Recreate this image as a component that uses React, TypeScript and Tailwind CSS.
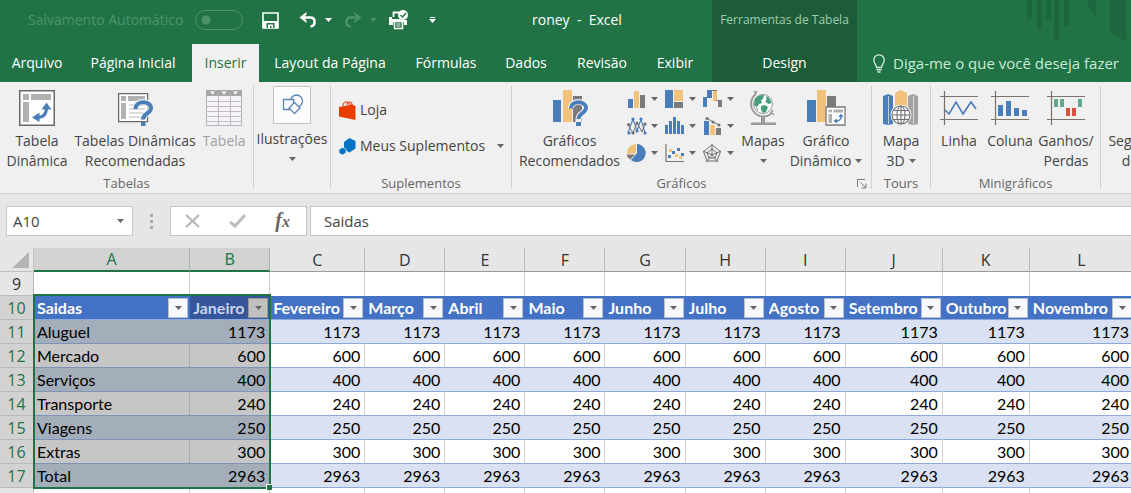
import React, { useState } from 'react'
import clsx from 'clsx'

const tabs = [
  { name: 'Arquivo', width: 'w-[74px]' },
  { name: 'Página Inicial', width: 'w-[118px]' },
  { name: 'Inserir', width: 'w-[67px]' },
  { name: 'Layout da Página', width: 'w-[142px]' },
  { name: 'Fórmulas', width: 'w-[90px]' },
  { name: 'Dados', width: 'w-[70px]' },
  { name: 'Revisão', width: 'w-[82px]' },
  { name: 'Exibir', width: 'w-16' },
]

const columns = [
  { letter: 'A', title: 'Saidas', width: 'w-[156px]' },
  { letter: 'B', title: 'Janeiro', width: 'w-20' },
  { letter: 'C', title: 'Fevereiro', width: 'w-[95px]' },
  { letter: 'D', title: 'Março', width: 'w-20' },
  { letter: 'E', title: 'Abril', width: 'w-20' },
  { letter: 'F', title: 'Maio', width: 'w-20' },
  { letter: 'G', title: 'Junho', width: 'w-20' },
  { letter: 'H', title: 'Julho', width: 'w-20' },
  { letter: 'I', title: 'Agosto', width: 'w-20' },
  { letter: 'J', title: 'Setembro', width: 'w-[97px]' },
  { letter: 'K', title: 'Outubro', width: 'w-[87px]' },
  { letter: 'L', title: 'Novembro', width: 'w-[104px]' },
]

const rows = [
  { n: 11, label: 'Aluguel', value: 1173 },
  { n: 12, label: 'Mercado', value: 600 },
  { n: 13, label: 'Serviços', value: 400 },
  { n: 14, label: 'Transporte', value: 240 },
  { n: 15, label: 'Viagens', value: 250 },
  { n: 16, label: 'Extras', value: 300 },
  { n: 17, label: 'Total', value: 2963 },
]

function Caret({ className }: { className?: string }) {
  return (
    <svg width="7" height="4" viewBox="0 0 7 4" className={clsx('shrink-0', className)} aria-hidden="true">
      <path d="M0 0h7L3.5 4z" fill="currentColor" />
    </svg>
  )
}

/* ---------- quick access icons ---------- */

function SaveIcon() {
  return (
    <svg width="17" height="17" viewBox="0 0 17 17" aria-hidden="true">
      <path d="M1 1h15v15H1z" fill="none" stroke="#fff" strokeWidth="1.6" />
      <path d="M1 9h15v7H1z" fill="#fff" />
      <path d="M4.5 11h8v5h-8z" fill="#217346" />
      <path d="M6 12.500h5V16H9.500v-2H8v2H6z" fill="#fff" />
    </svg>
  )
}

function UndoIcon({ flip }: { flip?: boolean }) {
  return (
    <svg width="18" height="16" viewBox="0 0 18 16" className={flip ? '-scale-x-100' : ''} aria-hidden="true">
      <path d="M3 5.500h8c6 0 6 8 .5 9" fill="none" stroke="currentColor" strokeWidth="2.600" />
      <path d="M7.500 0v2.500L4.500 5.500l3 3V11L0.500 5.500z" fill="currentColor" />
    </svg>
  )
}

function PrintPreviewIcon() {
  return (
    <svg width="20" height="20" viewBox="0 0 20 20" aria-hidden="true">
      <path d="M4.500 7V2.500h6" fill="none" stroke="#fff" strokeWidth="1.800" />
      <path d="M0 7h3v2h8l2 1h5v5h-3v-3H4v3H0z" fill="#fff" />
      <path d="M5.500 11.500h8v7h-8z" fill="#217346" stroke="#fff" strokeWidth="1.500" />
      <path d="M7.500 14h4M7.500 16h4" stroke="#fff" />
      <circle cx="14" cy="5" r="5" fill="#fff" />
      <path d="M11.500 5l2 2 3.500-4" fill="none" stroke="#217346" strokeWidth="1.400" />
    </svg>
  )
}

function BulbIcon() {
  return (
    <svg width="12" height="19" viewBox="0 0 12 19" fill="none" stroke="#d5f0df" strokeWidth="1.300" aria-hidden="true">
      <path d="M3.500 13.500c0-3-2.700-4-2.700-7.500a5.200 5.200 0 0 1 10.400 0c0 3.500-2.700 4.500-2.700 7.500z" />
      <path d="M3.500 15.800h5M4.500 18h3" strokeWidth="1.600" />
    </svg>
  )
}

/* ---------- ribbon icons ---------- */

function PivotIcon() {
  return (
    <svg width="36" height="36" viewBox="0 0 36 36" aria-hidden="true">
      <path d="M.75.75h34.500v34.500H.75z" fill="#fff" stroke="#6a6a6a" strokeWidth="1.500" />
      <path d="M4 4h6v6H4zM12 4h20v6H12zM4 12h6v20H4z" fill="#b1b1b1" />
      <path d="M18 27.500c6.500 0 9.500-3 9.500-10" fill="none" stroke="#4a7ebb" strokeWidth="3" />
      <path d="M27.500 12.500l5 7h-10zM13 27.500l7.500-5v9.500z" fill="#4a7ebb" />
    </svg>
  )
}

function PivotHelpIcon() {
  return (
    <svg width="36" height="36" viewBox="0 0 36 36" aria-hidden="true">
      <path d="M1.600 3.600h29v28h-29z" fill="#fff" stroke="#6a6a6a" strokeWidth="1.300" />
      <path d="M4 6h5v5H4zM11 6h17v5H11zM4 13h5v16H4z" fill="#b1b1b1" />
      <path d="M12 15h16M12 19h16M12 23h16M12 27h16" stroke="#b9b9b9" />
      <path d="M18.500 18.500c0-9 15-8.500 15-.5 0 5.500-7.500 5.500-7.500 12" fill="none" stroke="#f0f0f0" strokeWidth="6" />
      <path d="M18.500 19c0-9 15.500-8.500 15.500-1 0 5.500-8 5.500-8 11.500" fill="none" stroke="#4a7ebb" strokeWidth="4" />
      <path d="M24 32h4.500v4H24z" fill="#4a7ebb" />
    </svg>
  )
}

function TableIcon() {
  return (
    <svg width="36" height="36" viewBox="0 0 36 36" aria-hidden="true">
      <path d="M.5.500h35v35H.5z" fill="#f6f3f8" stroke="#b5b1b8" />
      <path d="M0 0h36v6H0z" fill="#a8a8a8" />
      <path d="M4 1.500h5L6.500 4.500zM15.500 1.500h5L18 4.500zM27 1.500h5L29.500 4.500z" fill="#fff" />
      <path d="M12.500 6v30M24.500 6v30M0 11.500h36M0 16.500h36M0 21.500h36M0 26.500h36M0 31.500h36" stroke="#c1bcc4" />
    </svg>
  )
}

function ShapesIcon() {
  return (
    <svg width="38" height="38" viewBox="0 0 38 38" aria-hidden="true">
      <path d="M.5.500h37v37H.5z" fill="#fafcfe" stroke="#c3c3c3" />
      <g fill="#fafcfe" stroke="#5f86b3" strokeWidth="1.300">
        <circle cx="23.500" cy="15" r="6" />
        <path d="M10.500 13.500h10v10h-10z" />
        <path d="M21.500 16.500l5.500 5.500-5.500 5.500-5.500-5.500z" />
      </g>
    </svg>
  )
}

function StoreIcon() {
  return (
    <svg width="17" height="20" viewBox="0 0 17 20" aria-hidden="true">
      <path d="M4 6c0-5 6-5.500 7-1M8 5c.5-4 5-4 5 0" fill="none" stroke="#e8532b" strokeWidth="1.200" />
      <path d="M0 7l13-2.500 3.500 1.500v14L0 16.500z" fill="#eb3c00" />
    </svg>
  )
}

function AddinsIcon() {
  return (
    <svg width="17" height="17" viewBox="0 0 17 17" aria-hidden="true">
      <path d="M10.500 0l6 3v7.500l-6 4-5.500-3V4z" fill="#0072c6" />
      <path d="M3.500 9.500L7 11v4l-3.500 2L0 15v-3.500z" fill="#0072c6" stroke="#f0f0f0" strokeWidth=".7" />
    </svg>
  )
}

function ChartHelpIcon() {
  return (
    <svg width="36" height="36" viewBox="0 0 36 36" aria-hidden="true">
      <path d="M1 10h8v22H1z" fill="#4a7ebb" />
      <path d="M11 0h9v32h-9z" fill="#f0c27b" />
      <path d="M21 6h9v26h-9z" fill="#7a7a7a" />
      <path d="M19 18c0-8 15-8 15 0 0 5-7.500 5-7.500 11.500v6" fill="none" stroke="#f0f0f0" strokeWidth="6" />
      <path d="M19 18.500c0-8.500 15-8 15-.5 0 5-7.500 5-7.500 11" fill="none" stroke="#4a7ebb" strokeWidth="3.800" />
      <path d="M24 32h5v4h-5z" fill="#4a7ebb" />
    </svg>
  )
}

function GlobeIcon() {
  return (
    <svg width="28" height="36" viewBox="0 0 28 36" aria-hidden="true">
      <circle cx="14" cy="14" r="9.500" fill="#fff" stroke="#9a9a9a" />
      <path d="M6 9c2-3 6-4.500 9-4l-1 4-2 1 1 3-3 1-2 3-3-2zM17 6c3 1 5 4 5.500 7l-3 1-3-2 1-3zM12 16l4-1 3 2-2 5-3 1-2-3zM6 16l3 3v2z" fill="#439e7b" />
      <path d="M7 4A12.500 12.500 0 0 0 22 24" fill="none" stroke="#9a9a9a" strokeWidth="2" />
      <path d="M5 1l2 3.500M8 1L6 4M22 22l3 3M24 20l-3 4" fill="none" stroke="#9a9a9a" strokeWidth="1.500" />
      <path d="M12 26h4v7h-4z" fill="#9a9a9a" />
      <path d="M2 35v-2.500h25V35z" fill="#9a9a9a" />
    </svg>
  )
}

function PivotChartIcon() {
  return (
    <svg width="39" height="36" viewBox="0 0 39 36" aria-hidden="true">
      <path d="M0 10h9v22H0z" fill="#4a7ebb" />
      <path d="M10 0h9v32h-9z" fill="#f0c27b" />
      <path d="M20 6h9v12h-9z" fill="#7a7a7a" />
      <path d="M19 17h19v18H19z" fill="#fff" stroke="#7a7a7a" strokeWidth="1.300" />
      <path d="M21.500 19.500h3.500v3h-3.500zM26.500 19.500H36v3h-9.500zM21.500 24h3.500v9h-3.500z" fill="#b1b1b1" />
      <path d="M28.500 31c4 0 5.500-1 5.500-5" fill="none" stroke="#4a7ebb" strokeWidth="1.600" />
      <path d="M34 23.500l2.500 3.500h-5zM26.500 31l3.500-2.500v5z" fill="#4a7ebb" />
    </svg>
  )
}

function Map3dIcon() {
  return (
    <svg width="36" height="36" viewBox="0 0 36 36" aria-hidden="true">
      <path d="M0 6l5-2 5 2v28l-5 1-5-1z" fill="#4a7ebb" />
      <path d="M12 3l6-3 6 3v18H12z" fill="#f0c27b" />
      <path d="M25 6l5-2 5 2v28l-5 1-5-1z" fill="#a3a3a3" />
      <path d="M5.500 6v28M30.500 6v28" stroke="#f0f0f0" strokeWidth=".7" />
      <circle cx="18" cy="25" r="10.500" fill="#f0f0f0" />
      <g fill="#fff" stroke="#6f6f6f" strokeWidth="1.100">
        <circle cx="18" cy="25" r="9" />
        <ellipse cx="18" cy="25" rx="4" ry="9" />
        <path d="M9 25h18M18 16v18M10.500 20.500h15M10.500 29.500h15" />
      </g>
    </svg>
  )
}

function SparkFrame({ children }: { children: React.ReactNode }) {
  return (
    <svg width="38" height="36" viewBox="0 0 38 36" aria-hidden="true">
      {children}
      <path d="M4.500 1v34M0 6.500h38M0 29.500h38" fill="none" stroke="#7b736c" strokeWidth="1.200" />
    </svg>
  )
}

const smallIcons: { name: string; icon: React.ReactNode }[] = [
  {
    name: 'Colunas',
    icon: (
      <>
        <path d="M1 9h5v9H1z" fill="#4a7ebb" />
        <path d="M7 1h5v17H7z" fill="#f0c27b" />
        <path d="M13 5h5v13h-5z" fill="#7a7a7a" />
      </>
    ),
  },
  {
    name: 'Hierarquia',
    icon: (
      <>
        <path d="M0 0h8v18H0z" fill="#4a7ebb" />
        <path d="M9 0h9v11H9z" fill="#f0c27b" />
        <path d="M9 12h9v6H9z" fill="#7a7a7a" />
      </>
    ),
  },
  {
    name: 'Cascata',
    icon: (
      <>
        <path d="M0 7h4v10H0zM4 0h5v8H4z" fill="#4a7ebb" />
        <path d="M10 0h4v11h-4z" fill="#f0c27b" />
        <path d="M15 10h4v7h-4z" fill="#7a7a7a" />
        <path d="M9 .500h5M13 10.500h5" stroke="#7a7a7a" />
      </>
    ),
  },
  {
    name: 'Linhas',
    icon: (
      <>
        <path d="M1 16L6 2l4 12 4-12 4 14" fill="none" stroke="#4a7ebb" strokeWidth="1.100" />
        <path d="M1 8l5 8 4-10 5 9 3-8" fill="none" stroke="#6f6f6f" />
        <g fill="#4a7ebb">
          <circle cx="6" cy="2" r="1.600" /><circle cx="14" cy="2" r="1.600" /><circle cx="2" cy="16" r="1.600" /><circle cx="18" cy="16" r="1.600" /><circle cx="10" cy="14" r="1.600" />
        </g>
        <g fill="#6f6f6f">
          <circle cx="1.600" cy="7.500" r="1.600" /><circle cx="6" cy="16" r="1.600" /><circle cx="10" cy="6" r="1.600" /><circle cx="18" cy="7" r="1.600" />
        </g>
      </>
    ),
  },
  {
    name: 'Estatística',
    icon: <path d="M0 8h3v9H0zM4 4h3v13H4zM8 0h3v17H8zM12 4h3v13h-3zM16 8h3v9h-3z" fill="#4a7ebb" />,
  },
  {
    name: 'Combinação',
    icon: (
      <>
        <path d="M1 4h5v14H1z" fill="#4a7ebb" />
        <path d="M7 8h5v10H7z" fill="#f0c27b" />
        <path d="M13 11h5v7h-5z" fill="#7a7a7a" />
        <path d="M4 1l6 4 6 3" fill="none" stroke="#6f6f6f" />
        <g fill="#6f6f6f">
          <circle cx="4" cy="1.500" r="1.500" /><circle cx="10" cy="5" r="1.500" /><circle cx="16" cy="8" r="1.500" />
        </g>
      </>
    ),
  },
  {
    name: 'Pizza',
    icon: (
      <>
        <path d="M9 9V0a9 9 0 0 0-9 10z" fill="#f0c27b" />
        <path d="M10 9V0a9 9 0 1 1-6 16z" fill="#4a7ebb" />
        <path d="M8 10.500l-5 5C1 14 0 12.500 0 10.500z" fill="#7a7a7a" />
      </>
    ),
  },
  {
    name: 'Dispersão',
    icon: (
      <>
        <path d="M1 0v17.500h18" fill="none" stroke="#7b736c" strokeWidth="1.200" />
        <path d="M3 11h3v3H3zM7 7h3v3H7zM12 4h3v3h-3zM16 9h3v3h-3z" fill="#4a7ebb" />
        <path d="M4 5h3v3H4zM10 10h3v3h-3zM14 12h3v3h-3z" fill="#f0c27b" />
      </>
    ),
  },
  {
    name: 'Radar',
    icon: (
      <>
        <path d="M9 1l8.500 6.500L14 17H4L.5 7.500zM9 5l5 4-2 5H6L4 9z" fill="none" stroke="#6f6f6f" />
        <path d="M9 0v11M0 7l9 4 9-4M3 18l6-7 6 7" fill="none" stroke="#6f6f6f" />
      </>
    ),
  },
]

/* ---------- ribbon pieces ---------- */

type BigButtonProps = {
  icon: React.ReactNode
  lines: string[]
  width: string
  disabled?: boolean
  caret?: 'inline' | 'below'
}

function BigButton({ icon, lines, width, disabled, caret }: BigButtonProps) {
  return (
    <button disabled={disabled} className={clsx('flex shrink-0 flex-col items-center pt-1', width, disabled ? 'text-[#a0a0a0]' : 'text-[#444]')}>
      <span className="flex h-[41px] items-start justify-center">{icon}</span>
      {lines.map((line, i) => (
        <span key={line} className="flex items-center gap-1 text-sm leading-5 whitespace-nowrap">
          {line}
          {caret === 'inline' && i === lines.length - 1 && <Caret className="text-[#666]" />}
        </span>
      ))}
      {caret === 'below' && <Caret className="mt-2 text-[#666]" />}
    </button>
  )
}

function Group({ label, width, children, launcher }: { label?: string; width: string; children: React.ReactNode; launcher?: boolean }) {
  return (
    <section aria-label={label} className={clsx('relative flex shrink-0 flex-col border-r border-[#d0d0d0]', width)}>
      <div className="flex flex-1">{children}</div>
      <div className={clsx('h-3 text-center text-[13px] leading-3 text-[#666]', launcher && 'pr-5')}>{label}</div>
      {launcher && (
        <button aria-label="Mais opções" className="absolute right-1 bottom-0">
          <svg width="10" height="10" viewBox="0 0 10 10" fill="none" stroke="#777">
            <path d="M.5 8V.500H8M3.500 3.500l5 5M9 4.500V9H4.500" />
          </svg>
        </button>
      )}
    </section>
  )
}

function Ribbon() {
  return (
    <div className="flex h-28 overflow-hidden border-b border-[#cfcfcf] bg-[#f0f0f0] py-1">
      <Group label="Tabelas" width="w-[254px]">
        <BigButton width="w-[74px]" icon={<PivotIcon />} lines={['Tabela', 'Dinâmica']} />
        <BigButton width="w-[122px]" icon={<PivotHelpIcon />} lines={['Tabelas Dinâmicas', 'Recomendadas']} />
        <BigButton width="w-[56px]" icon={<TableIcon />} lines={['Tabela']} disabled />
      </Group>
      <Group width="w-[77px]">
        <button className="flex w-full flex-col items-center text-[#444]">
          <span className="flex h-[43px] items-start"><ShapesIcon /></span>
          <span className="text-sm leading-5">Ilustrações</span>
          <Caret className="mt-2 text-[#666]" />
        </button>
      </Group>
      <Group label="Suplementos" width="w-[181px]">
        <div className="flex flex-1 flex-col gap-4 pt-[14px] pl-2 text-sm leading-5 text-[#444]">
          <button className="flex items-center gap-1"><StoreIcon />Loja</button>
          <button className="flex items-center gap-1 whitespace-nowrap"><AddinsIcon />Meus Suplementos<Caret className="ml-2 text-[#666]" /></button>
        </div>
      </Group>
      <Group label="Gráficos" width="w-[360px]" launcher>
        <BigButton width="w-[115px]" icon={<ChartHelpIcon />} lines={['Gráficos', 'Recomendados']} />
        <div className="grid h-[81px] w-[114px] grid-cols-3">
          {smallIcons.map((s) => (
            <button key={s.name} aria-label={s.name} className="flex h-[26px] items-center gap-1">
              <svg width="20" height="18" viewBox="0 0 20 18" aria-hidden="true">{s.icon}</svg>
              <Caret className="text-[#666]" />
            </button>
          ))}
        </div>
        <BigButton width="w-[44px]" icon={<GlobeIcon />} lines={['Mapas']} caret="below" />
        <BigButton width="w-[82px]" icon={<PivotChartIcon />} lines={['Gráfico', 'Dinâmico']} caret="inline" />
      </Group>
      <Group label="Tours" width="w-[59px]">
        <BigButton width="w-[58px]" icon={<Map3dIcon />} lines={['Mapa', '3D']} caret="inline" />
      </Group>
      <Group label="Minigráficos" width="w-[170px]">
        <BigButton
          width="w-[56px]"
          lines={['Linha']}
          icon={<SparkFrame><path d="M4 19l5 5 7-12 7 12 8-12 5 7" fill="none" stroke="#4a7ebb" strokeWidth="1.600" /></SparkFrame>}
        />
        <BigButton
          width="w-[46px]"
          lines={['Coluna']}
          icon={<SparkFrame><path d="M7 15h5v11H7zM15 11h5v15h-5zM23 18h5v8h-5zM31 20h5v6h-5z" fill="#4a7ebb" /></SparkFrame>}
        />
        <BigButton
          width="w-[66px]"
          lines={['Ganhos/', 'Perdas']}
          icon={
            <SparkFrame>
              <path d="M7 9h4v8H7zM13 9h4v8h-4zM31 9h4v8h-4z" fill="#62a88a" />
              <path d="M19 18h4v8h-4zM25 18h4v8h-4z" fill="#d8503f" />
            </SparkFrame>
          }
        />
      </Group>
      <Group width="w-[104px]">
        <BigButton width="w-[103px]" icon={null} lines={['Segmentação', 'de Dados']} />
      </Group>
    </div>
  )
}

function Header() {
  const [active, setActive] = useState('Inserir')

  return (
    <header className="relative flex overflow-hidden bg-[#217346] text-white">
      <svg width="110" height="46" viewBox="0 0 110 46" className="absolute top-0 right-0" fill="#1e673e" aria-hidden="true">
        <path d="M6 0h5v20H6zM16 0h5v30h-5zM25 0h5v19h-5zM33 0h5v40h-5zM43 0h5v26h-5zM66 0h9v16q-7-6-9-16zM89 0h16v41l-16-8z" />
      </svg>
      <div className="w-[712px] shrink-0">
        <div className="flex h-11 items-center pb-1 pl-7">
          <label className="flex w-[234px] items-center gap-3 text-sm text-[#4a9369]">
            Salvamento Automático
            <input type="checkbox" disabled className="h-5 w-12 appearance-none rounded-full border border-[#4a9369] bg-[radial-gradient(circle_at_10px_9px,#4a9369_4px,transparent_5px)]" />
          </label>
          <button aria-label="Salvar"><SaveIcon /></button>
          <button aria-label="Desfazer" className="ml-5 flex items-center gap-2"><UndoIcon /><Caret /></button>
          <button aria-label="Refazer" disabled className="ml-3 flex items-center gap-2 text-[#4a9369]"><UndoIcon flip /><Caret /></button>
          <button aria-label="Visualizar impressão" className="ml-3"><PrintPreviewIcon /></button>
          <button aria-label="Personalizar" className="ml-5 flex flex-col items-center gap-px">
            <span className="h-px w-[5px] bg-white" />
            <Caret />
          </button>
          <h1 className="flex-1 pr-[86px] pl-24 text-sm whitespace-pre">roney  -  Excel</h1>
        </div>
        <nav className="flex h-[38px] text-sm">
          {tabs.map((t) => (
            <button
              key={t.name}
              onClick={() => setActive(t.name)}
              className={clsx('shrink-0 whitespace-nowrap', t.width, active === t.name ? 'bg-[#f0f0f0] text-[#217346]' : 'text-white')}
            >
              {t.name}
            </button>
          ))}
        </nav>
      </div>
      <div className="relative w-[145px] shrink-0 bg-[#1c5c38] text-center">
        <div className="h-11 pb-1 text-xs leading-10 text-[#a3cdb3]">Ferramentas de Tabela</div>
        <button className="h-[38px] w-full text-sm">Design</button>
      </div>
      <div className="relative flex flex-1 items-end pl-4">
        <button className="flex h-[38px] items-center gap-2 text-[15px] whitespace-nowrap text-[#c9ecd6]">
          <BulbIcon />
          Diga-me o que você deseja fazer
        </button>
      </div>
    </header>
  )
}

function FormulaBar() {
  return (
    <div className="flex h-[54px] bg-[#e6e6e6] pt-3 pl-[6px] text-[15px] text-[#444]">
      <div className="flex h-[30px] w-[127px] shrink-0 items-center border border-[#c6c6c6] bg-white pr-2">
        <input aria-label="Caixa de nome" defaultValue="A10" className="w-full min-w-0 pl-[6px] outline-none" />
        <button aria-label="Abrir nomes"><Caret className="text-[#666]" /></button>
      </div>
      <div className="flex h-[30px] w-[37px] shrink-0 flex-col items-center justify-center gap-[3px]">
        <span className="size-[3px] bg-[#aaa]" />
        <span className="size-[3px] bg-[#aaa]" />
        <span className="size-[3px] bg-[#aaa]" />
      </div>
      <div className="flex h-[30px] w-[137px] shrink-0 items-center justify-between border border-[#c6c6c6] bg-white pr-4 pl-[14px]">
        <button aria-label="Cancelar">
          <svg width="15" height="14" viewBox="0 0 15 14" stroke="#b3b3b3" strokeWidth="2"><path d="M1 1l13 12M14 1L1 13" /></svg>
        </button>
        <button aria-label="Inserir valor">
          <svg width="17" height="14" viewBox="0 0 17 14" fill="none" stroke="#bdbdbd" strokeWidth="3"><path d="M1 8l5 4L16 1" /></svg>
        </button>
        <button aria-label="Inserir função" className="font-['Liberation_Serif',serif] text-xl leading-6 font-bold text-[#666] italic">
          f<span className="text-base">x</span>
        </button>
      </div>
      <input aria-label="Barra de fórmulas" defaultValue="Saidas" className="ml-[3px] h-[30px] min-w-0 flex-1 border border-r-0 border-[#c6c6c6] bg-white pl-[13px] outline-none" />
    </div>
  )
}

function FilterButton({ column, dim }: { column: string; dim?: boolean }) {
  return (
    <button
      aria-label={`Filtrar ${column}`}
      className={clsx('flex h-5 w-5 shrink-0 items-center justify-center border', dim ? 'border-[#9a9a9a] bg-[#c0c0c0]' : 'border-[#b8bfce] bg-[#f8f9fc]')}
    >
      <Caret className="text-[#666]" />
    </button>
  )
}

function Sheet() {
  return (
    <div className="relative flex-1 overflow-hidden bg-white">
      <table className="w-[1134px] table-fixed border-separate border-spacing-0 font-[Lato,sans-serif] text-base leading-none text-black">
        <colgroup>
          <col className="w-[34px]" />
          {columns.map((c) => <col key={c.letter} className={c.width} />)}
        </colgroup>
        <thead>
          <tr className="h-6 font-['Open_Sans',sans-serif]">
            <th aria-label="Selecionar tudo" className="border-r border-b border-[#c0c0c0] bg-[#e6e6e6] p-0">
              <svg width="17" height="16" viewBox="0 0 17 16" className="mr-1 ml-auto" aria-hidden="true"><path d="M17 0v16H0z" fill="#b4b4b4" /></svg>
            </th>
            {columns.map((c, i) => (
              <th
                key={c.letter}
                scope="col"
                className={clsx('border-r p-0 font-normal', i < 2 ? 'border-r-[#b0b0b0] border-b-2 border-b-[#217346] bg-[#d2d2d2] text-[#217346]' : 'border-b border-r-[#b9b9b9] border-b-[#9b9b9b] bg-[#e6e6e6] text-[#333]')}
              >
                {c.letter}
              </th>
            ))}
          </tr>
        </thead>
        <tbody>
          <tr className="h-6">
            <th scope="row" className="border-r border-b border-[#b9b9b9] bg-[#e6e6e6] p-0 font-['Open_Sans',sans-serif] font-normal text-[#333]">9</th>
            {columns.map((c) => <td key={c.letter} className="border-r border-[#d0d0d0] p-0" />)}
          </tr>
          <tr className="h-6">
            <th scope="row" className="border-r border-b border-[#b9b9b9] bg-[#d2d2d2] p-0 font-['Open_Sans',sans-serif] font-normal text-[#217346]">10</th>
            {columns.map((c, i) => (
              <th key={c.letter} scope="col" className={clsx('border-b border-[#8ea9db] p-0', i === 1 ? 'bg-[#35569b] text-[#c9d3e8]' : 'bg-[#4472c4] text-white')}>
                <div className="flex h-[23px] items-center pr-[2px] pl-[3px]">
                  <span className="min-w-0 flex-1 overflow-hidden text-left leading-5 whitespace-nowrap">{c.title}</span>
                  <FilterButton column={c.title} dim={i === 1} />
                </div>
              </th>
            ))}
          </tr>
          {rows.map((r) => {
            const band = r.n % 2 === 1
            return (
              <tr key={r.n} className="h-6">
                <th scope="row" className="border-r border-b border-[#b9b9b9] bg-[#d2d2d2] p-0 font-['Open_Sans',sans-serif] font-normal text-[#217346]">{r.n}</th>
                {columns.map((c, i) => (
                  <td
                    key={c.letter}
                    className={clsx(
                      'border-r border-b py-0 pr-1 pl-[3px]',
                      i === 0 ? 'text-left' : 'text-right',
                      i < 2 ? 'border-b-[#7f93b8]' : 'border-b-[#8ea9db]',
                      i < 2 && (band ? 'border-r-[#a4aebb] bg-[#a4aebb]' : 'border-r-[#a9a9a9] bg-[#c6c6c6]'),
                      i >= 2 && (band ? 'border-r-[#d9e1f2] bg-[#d9e1f2]' : 'border-r-[#d0d0d0] bg-white')
                    )}
                  >
                    {i === 0 ? r.label : r.value}
                  </td>
                ))}
              </tr>
            )
          })}
          <tr className="h-6">
            <th scope="row" aria-label="18" className="border-r border-[#b9b9b9] bg-[#e6e6e6] p-0" />
            {columns.map((c) => <td key={c.letter} className="border-r border-[#d0d0d0] p-0" />)}
          </tr>
        </tbody>
      </table>

      {/* selected range A10:B17 */}
      <div className="pointer-events-none absolute top-[46px] left-[33px] h-[195px] w-[238px] border-2 border-[#217346]">
        <span className="absolute -right-[3px] -bottom-[3px] size-[6px] border-t border-l border-white bg-[#217346]" />
      </div>
    </div>
  )
}

export default function App() {
  return (
    <div className="flex h-screen flex-col overflow-hidden bg-[#e6e6e6] font-['Open_Sans',sans-serif]">
      <Header />
      <Ribbon />
      <FormulaBar />
      <Sheet />
    </div>
  )
}
